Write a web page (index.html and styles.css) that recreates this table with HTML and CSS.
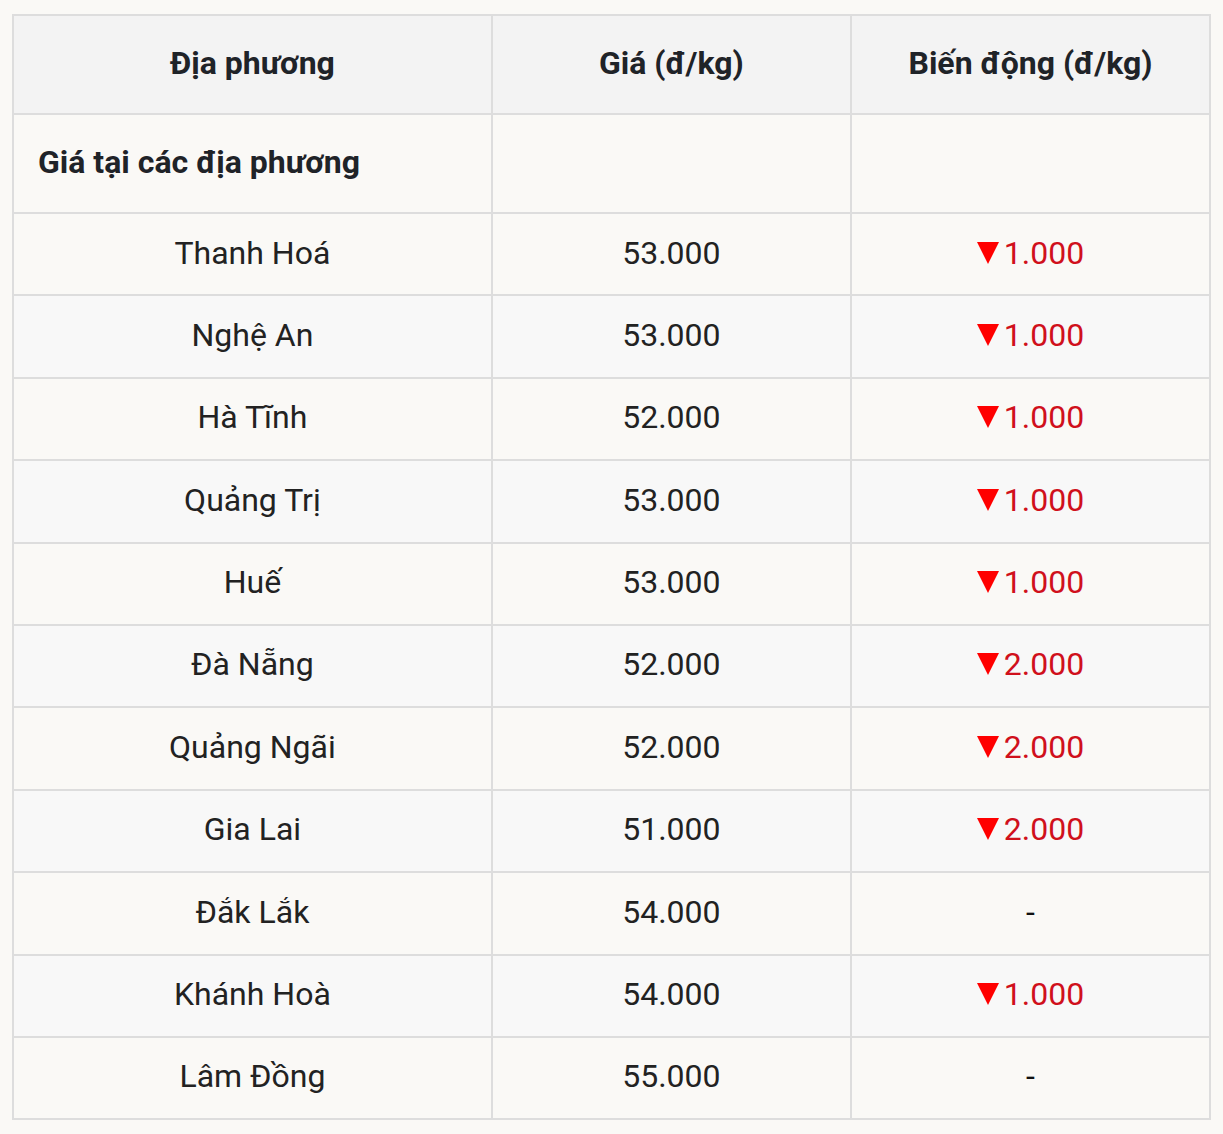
FILE: index.html
```html
<!DOCTYPE html>
<html lang="vi">
<head>
<meta charset="utf-8">
<title>Giá</title>
<link rel="stylesheet" href="styles.css">
</head>
<body>
<table class="price-table">
  <colgroup>
    <col class="c1"><col class="c2"><col class="c3">
  </colgroup>
  <thead>
    <tr><th>Địa phương</th><th>Giá (đ/kg)</th><th>Biến động (đ/kg)</th></tr>
  </thead>
  <tbody>
    <tr class="section"><td>Giá tại các địa phương</td><td></td><td></td></tr>
    <tr><td>Thanh Hoá</td><td>53.000</td><td class="down"><span class="tri" aria-label="giảm"></span>1.000</td></tr>
    <tr class="alt"><td>Nghệ An</td><td>53.000</td><td class="down"><span class="tri" aria-label="giảm"></span>1.000</td></tr>
    <tr><td>Hà Tĩnh</td><td>52.000</td><td class="down"><span class="tri" aria-label="giảm"></span>1.000</td></tr>
    <tr class="alt"><td>Quảng Trị</td><td>53.000</td><td class="down"><span class="tri" aria-label="giảm"></span>1.000</td></tr>
    <tr><td>Huế</td><td>53.000</td><td class="down"><span class="tri" aria-label="giảm"></span>1.000</td></tr>
    <tr class="alt"><td>Đà Nẵng</td><td>52.000</td><td class="down"><span class="tri" aria-label="giảm"></span>2.000</td></tr>
    <tr><td>Quảng Ngãi</td><td>52.000</td><td class="down"><span class="tri" aria-label="giảm"></span>2.000</td></tr>
    <tr class="alt"><td>Gia Lai</td><td>51.000</td><td class="down"><span class="tri" aria-label="giảm"></span>2.000</td></tr>
    <tr><td>Đắk Lắk</td><td>54.000</td><td class="flat">-</td></tr>
    <tr class="alt"><td>Khánh Hoà</td><td>54.000</td><td class="down"><span class="tri" aria-label="giảm"></span>1.000</td></tr>
    <tr><td>Lâm Đồng</td><td>55.000</td><td class="flat">-</td></tr>
  </tbody>
</table>
</body>
</html>
```

FILE: styles.css
```css
html, body {
  margin: 0;
  background: #faf9f6;
}
body {
  padding: 14px 12px;
  font-family: Roboto, "Liberation Sans", sans-serif;
  color: #222;
}
.price-table {
  width: 1199px;
  border-collapse: collapse;
  table-layout: fixed;
  font-size: 32px;
  line-height: 40px;
}
.c1 { width: 40%; }
.c2 { width: 30%; }
.c3 { width: 30%; }
.price-table th,
.price-table td {
  border: 2px solid #dddddd;
  text-align: center;
  padding: 18.5px 16px 21.9px;
}
.price-table th {
  background: #f3f3f3;
  font-weight: 700;
  color: #1f2328;
  padding: 27px 16px 30px;
}
.price-table tr.section td {
  font-weight: 700;
  text-align: left;
  padding: 27px 24px 30px;
  color: #1f2328;
}
.price-table tr.alt td {
  background: #f8f8f8;
}
.down {
  color: #d0101c;
}
.tri {
  display: inline-block;
  width: 0;
  height: 0;
  border-left: 11px solid transparent;
  border-right: 11px solid transparent;
  border-top: 22px solid #ff0000;
  vertical-align: baseline;
  margin-right: 5px;
}
.flat {
  color: #111;
}
```
